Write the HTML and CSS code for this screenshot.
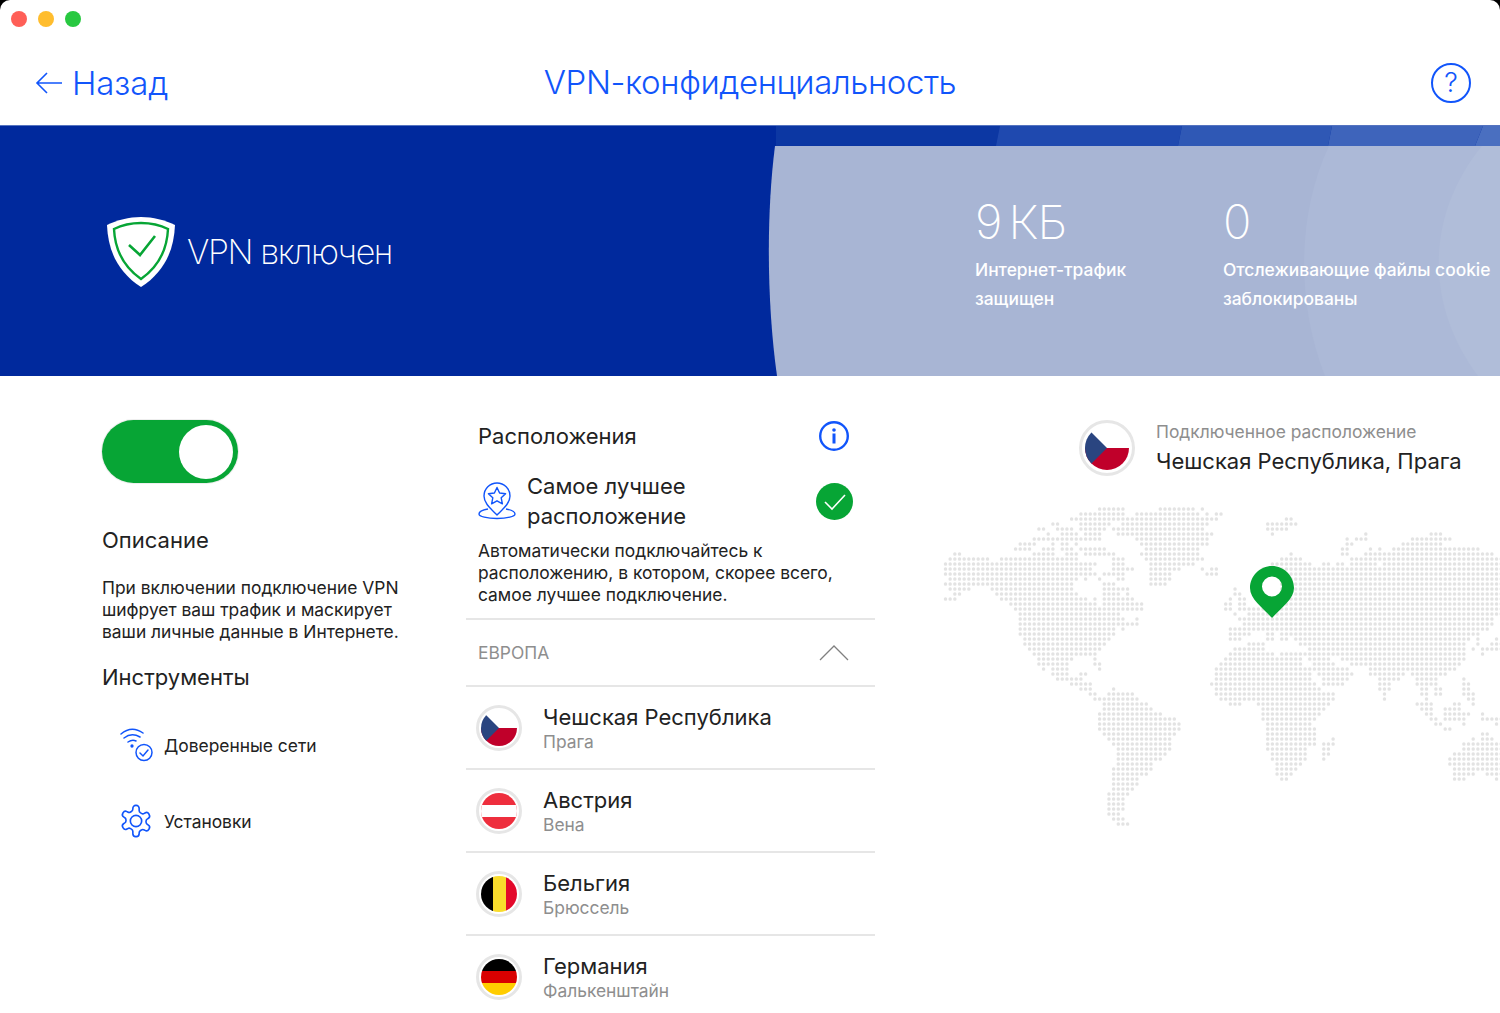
FILE: index.html
```html
<!DOCTYPE html>
<html lang="ru">
    <head>
        <meta charset="UTF-8">
        <title>VPN-конфиденциальность</title>
        <link rel="stylesheet" href="styles.css">
    </head>
    <body>
        <div class="window">
            <div class="titlebar">
                <span class="light light-red"></span>
                <span class="light light-yellow"></span>
                <span class="light light-green"></span>
            </div>

            <header class="topbar">
                <a class="back">
                    <svg class="back-icon" viewBox="0 0 28 22"><path d="M27 11H2M12 1 2 11l10 10"/></svg>
                    <span>Назад</span>
                </a>
                <h1 class="page-title">VPN-конфиденциальность</h1>
                <span class="help">?</span>
            </header>

            <section class="banner">
                <svg class="banner-bg" viewBox="0 0 1500 251" preserveAspectRatio="none">
                    <rect x="776" width="224" height="20" fill="#0c37a3"/>
                    <path d="M1000 0h182l-4 20h-182z" fill="#1f49af"/>
                    <path d="M1182 0h150l-4 20h-150z" fill="#2f58b5"/>
                    <path d="M1332 0h151l-8 20h-147z" fill="#3e64bb"/>
                    <path d="M1483 0h17v20h-25z" fill="#4a6fc0"/>
                    <path d="M775 20H1500V251H777C767 180 766 90 775 20z" fill="#a8b5d4"/>
                    <path d="M1329 20H1500V251H1325C1297 180 1296 90 1329 20z" fill="#acb9d7"/>
                    <path d="M1482 20H1500V251H1478C1425 180 1425 90 1482 20z" fill="#b0bdd9"/>
                </svg>
                <div class="status">
                    <svg class="shield" viewBox="0 0 68 70">
                        <path d="M34 0C46 0 58 3 68 8 67 35 56 56 34 70 12 56 1 35 0 8 10 3 22 0 34 0z" fill="#fff"/>
                        <path d="M34 6C44 6 53 8 61 12 60 34 51 50 34 62 17 50 8 34 7 12 15 8 24 6 34 6z" fill="none" stroke="#07a535" stroke-width="2.4"/>
                        <path d="M22 28l11 10 15-19" fill="none" stroke="#07a535" stroke-width="2.6"/>
                    </svg>
                    <span class="status-text">VPN включен</span>
                </div>
                <div class="stats">
                    <div class="stat stat-traffic">
                        <div class="stat-value">9 КБ</div>
                        <div class="stat-label">Интернет-трафик<br>защищен</div>
                    </div>
                    <div class="stat">
                        <div class="stat-value">0</div>
                        <div class="stat-label">Отслеживающие файлы cookie<br>заблокированы</div>
                    </div>
                </div>
            </section>

            <main class="content">
                <section class="col-left">
                    <div class="toggle"><span class="knob"></span></div>
                    <h2 class="heading heading-desc">Описание</h2>
                    <p class="text">При включении подключение VPN шифрует ваш трафик и маскирует ваши личные данные в Интернете.</p>
                    <h2 class="heading heading-tools">Инструменты</h2>
                    <div class="tool tool-first">
                        <svg class="tool-icon" viewBox="0 0 34 34" fill="none" stroke="#1155fb" stroke-width="1.5" stroke-linecap="round">
                            <path d="M2 6C9 0 17 0 24 5M5 10C10 6 16 6 21 9M9 14C12 12 15 12 17 13"/>
                            <circle cx="13" cy="18" r=".9" fill="#1155fb"/>
                            <circle cx="25" cy="24.5" r="8"/>
                            <path d="M21 25l3 3 5-6"/>
                        </svg>
                        <span>Доверенные сети</span>
                    </div>
                    <div class="tool">
                        <svg class="tool-icon" viewBox="0 0 24 24" fill="none" stroke="#1155fb" stroke-width="1.15" stroke-linejoin="round">
                            <path d="M12.22 1h-.44a2 2 0 0 0-2 2v.6a2 2 0 0 1-1 1.73l-.63.36a2 2 0 0 1-2 0l-.5-.28a2 2 0 0 0-2.73.73l-.22.38a2 2 0 0 0 .73 2.73l.5.3a2 2 0 0 1 1 1.72v.5a2 2 0 0 1-1 1.74l-.5.29a2 2 0 0 0-.73 2.73l.22.38a2 2 0 0 0 2.73.73l.5-.28a2 2 0 0 1 2 0l.63.36a2 2 0 0 1 1 1.73V21a2 2 0 0 0 2 2h.44a2 2 0 0 0 2-2v-.6a2 2 0 0 1 1-1.73l.63-.36a2 2 0 0 1 2 0l.5.28a2 2 0 0 0 2.73-.73l.22-.39a2 2 0 0 0-.73-2.73l-.5-.28a2 2 0 0 1-1-1.74v-.5a2 2 0 0 1 1-1.74l.5-.29a2 2 0 0 0 .73-2.73l-.22-.38a2 2 0 0 0-2.73-.73l-.5.28a2 2 0 0 1-2 0l-.63-.36a2 2 0 0 1-1-1.73V3a2 2 0 0 0-2-2z"/>
                            <circle cx="12" cy="12" r="4"/>
                        </svg>
                        <span>Установки</span>
                    </div>
                </section>

                <section class="col-mid">
                    <div class="loc-head">
                        <h2 class="heading">Расположения</h2>
                        <svg class="info" viewBox="0 0 30 30">
                            <circle cx="15" cy="15" r="13.8" fill="none" stroke="#1155fb" stroke-width="2.400"/>
                            <circle cx="15" cy="9" r="1.800" fill="#1155fb"/>
                            <rect x="13.500" y="12.500" width="3" height="10" fill="#1155fb"/>
                        </svg>
                    </div>
                    <div class="best">
                        <svg class="best-icon" viewBox="0 0 38 38" fill="none" stroke="#1155fb" stroke-width="1.4" stroke-linejoin="round">
                            <path d="M19 33C12 26 6 21 6 14a13 13 0 0 1 26 0C32 21 26 26 19 33z"/>
                            <path d="M19 5.500l2.600 5.500 6 .7-4.400 4.100 1.200 6-5.400-3-5.400 3 1.200-6-4.400-4.100 6-.7z"/>
                            <path d="M10 27C4 28 1 30 1 32c0 2.500 8 4.500 18 4.500s18-2 18-4.500c0-2-3-4-9-5"/>
                        </svg>
                        <span class="best-name">Самое лучшее<br>расположение</span>
                        <svg class="best-check" viewBox="0 0 37 37">
                            <circle cx="18.500" cy="18.500" r="18.500" fill="#07a535"/>
                            <path d="M9 19l7 7 13-14" fill="none" stroke="#fff" stroke-width="1.600"/>
                        </svg>
                    </div>
                    <p class="text best-text">Автоматически подключайтесь к расположению, в котором, скорее всего, самое лучшее подключение.</p>
                    <div class="region">
                        <span>ЕВРОПА</span>
                        <svg class="chevron" viewBox="0 0 30 16"><path d="M1 15 15 1l14 14"/></svg>
                    </div>
                    <div class="country">
                        <div class="flag">
                            <svg viewBox="0 0 36 36"><rect width="36" height="36" fill="#fff"/><rect y="18" width="36" height="18" fill="#c0002a"/><path d="M0 0v36l18-18z" fill="#2a4580"/></svg>
                        </div>
                        <div><div class="country-name">Чешская Республика</div><div class="country-city">Прага</div></div>
                    </div>
                    <div class="country">
                        <div class="flag">
                            <svg viewBox="0 0 36 36"><rect width="36" height="36" fill="#ee2e3d"/><rect y="12" width="36" height="12" fill="#fff"/></svg>
                        </div>
                        <div><div class="country-name">Австрия</div><div class="country-city">Вена</div></div>
                    </div>
                    <div class="country">
                        <div class="flag">
                            <svg viewBox="0 0 36 36"><rect width="12" height="36" fill="#000"/><rect x="12" width="13" height="36" fill="#f9dc2c"/><rect x="25" width="11" height="36" fill="#e3082a"/></svg>
                        </div>
                        <div><div class="country-name">Бельгия</div><div class="country-city">Брюссель</div></div>
                    </div>
                    <div class="country">
                        <div class="flag">
                            <svg viewBox="0 0 36 36"><rect width="36" height="12" fill="#000"/><rect y="12" width="36" height="12" fill="#d90000"/><rect y="24" width="36" height="12" fill="#ffcd00"/></svg>
                        </div>
                        <div><div class="country-name">Германия</div><div class="country-city">Фалькенштайн</div></div>
                    </div>
                </section>

                <section class="col-right">
                    <div class="connected">
                        <div class="flag flag-big">
                            <svg viewBox="0 0 36 36"><rect width="36" height="36" fill="#fff"/><rect y="18" width="36" height="18" fill="#c0002a"/><path d="M0 0v36l18-18z" fill="#2a4580"/></svg>
                        </div>
                        <div>
                            <div class="connected-label">Подключенное расположение</div>
                            <div class="connected-name">Чешская Республика, Прага</div>
                        </div>
                    </div>
                    <div class="map">
                        <svg class="map-dots" width="557" height="325" viewBox="0 0 557 325">
                            <path transform="translate(2.5 2) scale(4.67 5)" fill="none" stroke="#e3e3e3" stroke-width=".74" stroke-linecap="round" stroke-dasharray="0 1" d="
                            M33 0H38.010M46 0H53.010M55 0h.01
                            M29 1H38.010M41 1H54.010M56 1h.01M58 1H59.010
                            M27 2H38.010M39 2H58.010M73 2H74.010
                            M23 3H24.010M29 3H35.010M38 3H56.010M69 3H75.010
                            M20 4H21.010M24 4H27.010M29 4H34.010M36 4H55.010M69 4H73.010
                            M22 5h.01M25 5H28.010M30 5H33.010M37 5H57.010M70 5h.01M90 5h.01M104 5H106.010
                            M19 6H33.010M41 6H56.010M86 6h.01M88 6H90.010M100 6H108.010
                            M16 7H19.010M23 7h.01M25 7H26.010M28 7h.01M42 7H56.010M86 7H87.010M98 7H106.010
                            M15 8H18.010M21 8H23.010M25 8H27.010M29 8H34.010M43 8H54.010M85 8H86.010M91 8h.01M93 8h.01M96 8H111.010M112 8H114.010
                            M2 9H3.010M19 9H23.010M26 9H28.010M30 9H36.010M42 9H54.010M74 9h.01M85 9H86.010M90 9H117.010
                            M1 10H9.010M12 10H28.010M36 10H38.010M43 10H55.010M72 10H76.010M87 10H120.010
                            M0 11H32.010M36 11H38.010M44 11H53.010M70 11H78.010M81 11H82.010M84 11H85.010M87 11H92.010M94 11H120.010
                            M0 12H31.010M36 12H40.010M44 12H50.010M55 12h.01M57 12H58.010M68 12H120.010
                            M0 13H32.010M34 13H38.010M44 13H48.010M56 13H58.010M72 13H120.010
                            M1 14H28.010M30 14h.01M33 14h.01M37 14H38.010M44 14H48.010M72 14H120.010
                            M0 15H27.010M34 15H36.010M44 15H47.010M72 15H120.010
                            M1 16H5.010M10 16H27.010M34 16H38.010M39 16h.01M62 16h.01M72 16H120.010
                            M2 17H3.010M11 17H28.010M34 17H37.010M39 17h.01M62 17H63.010M72 17H120.010
                            M0 18H2.010M12 18H30.010M32 18h.01M34 18H40.010M61 18h.01M63 18H64.010M72 18H120.010
                            M14 19H32.010M34 19H42.010M60 19H61.010M63 19H64.010M72 19H120.010
                            M15 20H42.010M60 20H61.010M63 20H65.010M66 20H120.010
                            M16 21H37.010M62 21h.01M65 21H120.010
                            M16 22H38.010M41 22h.01M63 22H117.010
                            M16 23H41.010M64 23H117.010
                            M16 24H36.010M38 24h.01M61 24H116.010
                            M16 25H36.010M61 25H65.010M69 25H70.010M72 25H114.010
                            M17 26H35.010M61 26H63.010M69 26H70.010M72 26H73.010M75 26H112.010M114 26h.01M118 26h.01
                            M17 27H34.010M65 27H68.010M76 27H111.010M114 27h.01M117 27H119.010
                            M18 28H33.010M62 28H68.010M78 28H111.010M113 28h.01M115 28H119.010
                            M19 29H32.010M61 29H70.010M72 29H111.010M115 29h.01
                            M20 30H27.010M32 30h.01M60 30H76.010M78 30H82.010M85 30H111.010
                            M20 31H26.010M32 31H33.010M59 31H76.010M79 31H83.010M87 31H110.010
                            M21 32h.01M23 32H26.010M33 32h.01M58 32H78.010M79 32H86.010M91 32H109.010
                            M23 33H26.010M29 33H30.010M58 33H78.010M80 33H87.010M91 33H98.010M100 33H107.010
                            M24 34H29.010M58 34H78.010M81 34H86.010M93 34H97.010M101 34H105.010M111 34h.01
                            M27 35H31.010M57 35H79.010M81 35H85.010M93 35H95.010M101 35H105.010M111 35H112.010
                            M29 36H31.010M36 36h.01M58 36H80.010M93 36H95.010M102 36H103.010M105 36H106.010M111 36H112.010
                            M31 37H32.010M35 37H40.010M58 37H83.010M94 37h.01M102 37H103.010M105 37H106.010M111 37H113.010
                            M32 38H34.010M35 38H41.010M59 38H83.010M94 38h.01M103 38h.01M112 38H113.010
                            M34 39H43.010M61 39H63.010M67 39H82.010M101 39H104.010M109 39H110.010M113 39h.01
                            M34 40H44.010M68 40H81.010M102 40H104.010M107 40H110.010
                            M33 41H46.010M68 41H80.010M103 41H104.010M107 41H110.010M111 41H112.010M115 41h.01
                            M33 42H49.010M68 42H79.010M104 42H105.010M107 42H111.010M115 42H119.010
                            M33 43H50.010M69 43H78.010M105 43H106.010M111 43h.01M118 43h.01
                            M33 44H50.010M69 44H79.010M107 44H108.010
                            M34 45H49.010M69 45H79.010M115 45H116.010
                            M35 46H48.010M69 46H79.010M83 46h.01M113 46h.01M115 46H117.010
                            M36 47H48.010M69 47H79.010M81 47H83.010M111 47H119.010
                            M37 48H48.010M69 48H77.010M81 48H82.010M111 48H119.010
                            M37 49H47.010M70 49H77.010M81 49H82.010M109 49H119.010
                            M37 50H46.010M70 50H77.010M81 50h.01M108 50H119.010
                            M37 51H44.010M71 51H76.010M108 51H119.010
                            M36 52H44.010M71 52H75.010M109 52H119.010
                            M36 53H43.010M71 53H74.010M109 53H113.010M116 53H119.010
                            M36 54H41.010M72 54H73.010M109 54H111.010M118 54h.01
                            M36 55H41.010
                            M36 56H40.010
                            M35 57H39.010
                            M35 58H38.010
                            M35 59H38.010
                            M35 60H38.010
                            M35 61H37.010
                            M36 62H38.010
                            M37 63H39.010"/>
                        </svg>
                        <svg class="pin" viewBox="0 0 44 52">
                            <path fill-rule="evenodd" fill="#07a535" d="M22 0C34 0 44 10 44 22 44 33 32 41 22 52 12 41 0 33 0 22 0 10 10 0 22 0zM22 10.500a10 10 0 1 0 0 20 10 10 0 1 0 0-20z"/>
                        </svg>
                    </div>
                </section>
            </main>
        </div>
    </body>
</html>
```
FILE: styles.css
```css
* {
    box-sizing: border-box;
}
html, body {
    margin: 0;
    height: 100%;
    background: #000;
    overflow: hidden;
}
.window {
    width: 1500px;
    height: 1013px;
    background: #fff;
    border-radius: 10px 10px 0 0;
    overflow: hidden;
    font-family: Inter, "Noto Sans", sans-serif;
    color: #222;
}

/* title bar */
.titlebar {
    height: 38px;
    display: flex;
    align-items: center;
    gap: 11px;
    padding-left: 11px;
}
.light {
    width: 16px;
    height: 16px;
    border-radius: 50%;
}
.light-red { background: #ff5f57; }
.light-yellow { background: #ffbd2e; }
.light-green { background: #28c840; }

.topbar {
    height: 87px;
    position: relative;
    display: flex;
    align-items: center;
    justify-content: space-between;
    padding: 2px 29px 0 35px;
    color: #1155fb;
}
.back {
    display: flex;
    align-items: center;
    gap: 9px;
    font-size: 33px;
    font-weight: 300;
    letter-spacing: -0.1px;
}
.back-icon {
    width: 28px;
    height: 22px;
    fill: none;
    stroke: #1155fb;
    stroke-width: 1.6;
}
.page-title {
    position: absolute;
    left: 0;
    right: 0;
    top: 24px;
    margin: 0;
    text-align: center;
    font-size: 33px;
    font-weight: 300;
    letter-spacing: -0.4px;
}
.help {
    width: 40px;
    height: 40px;
    border: 2px solid #1155fb;
    border-radius: 50%;
    text-align: center;
    font-size: 27px;
    font-weight: 300;
    line-height: 36px;
}

/* banner */
.banner {
    height: 251px;
    position: relative;
    display: flex;
    align-items: center;
    background: #00299d;
    border-top: 1px solid #5574c0;
    color: #fff;
}
.banner-bg {
    position: absolute;
    left: 0;
    top: 0;
    width: 100%;
    height: 100%;
}
.status {
    position: relative;
    display: flex;
    align-items: center;
    gap: 13px;
    padding: 2px 0 0 107px;
    width: 975px;
}
.shield {
    width: 68px;
    height: 70px;
}
.status-text {
    margin: -2px 0 0 -1px;
    font-size: 34px;
    font-weight: 200;
    letter-spacing: -1.4px;
}
.stats {
    position: relative;
    display: flex;
    margin-top: 4px;
}
.stat-traffic {
    width: 248px;
}
.stat-value {
    font-size: 47px;
    font-weight: 200;
    line-height: 56px;
    letter-spacing: -1px;
    word-spacing: -5px;
}
.stat-label {
    margin-top: 5px;
    font-size: 17.4px;
    font-weight: 500;
    line-height: 29px;
    white-space: nowrap;
}

/* content */
.content {
    display: flex;
    height: 637px;
}
.col-left {
    width: 466px;
    padding: 44px 0 0 102px;
}
.toggle {
    width: 136px;
    height: 63px;
    display: flex;
    align-items: center;
    justify-content: flex-end;
    padding-right: 5px;
    background: #07a535;
    border-radius: 32px;
    box-shadow: 0 0 0 1px #eee;
}
.knob {
    width: 54px;
    height: 54px;
    background: #fff;
    border-radius: 50%;
}
.heading {
    margin: 0;
    font-size: 22px;
    font-weight: 400;
    line-height: 30px;
}
.heading-desc {
    margin-top: 42px;
}
.text {
    margin: 0;
    font-size: 17.4px;
    line-height: 22px;
}
.col-left .text {
    width: 310px;
    margin-top: 22px;
}
.heading-tools {
    margin-top: 19px;
}
.tool {
    display: flex;
    align-items: center;
    gap: 11px;
    height: 34px;
    margin: 42px 0 0 17px;
    font-size: 17.4px;
}
.tool-first {
    margin-top: 36px;
}
.tool-icon {
    width: 34px;
    height: 34px;
}

.col-mid {
    width: 409px;
}
.loc-head {
    display: flex;
    align-items: center;
    justify-content: space-between;
    padding: 45px 26px 0 12px;
}
.info {
    width: 30px;
    height: 30px;
}
.best {
    display: flex;
    align-items: center;
    padding: 20px 22px 0 12px;
}
.best-icon {
    width: 38px;
    height: 38px;
}
.best-name {
    flex: 1;
    margin-left: 11px;
    font-size: 22px;
    line-height: 30px;
}
.best-check {
    width: 37px;
    height: 37px;
}
.best-text {
    padding: 9px 11px 0 12px;
}
.region {
    display: flex;
    align-items: center;
    justify-content: space-between;
    height: 69px;
    margin-top: 12px;
    padding: 0 26px 0 12px;
    border-top: 2px solid #e6e6e6;
    border-bottom: 2px solid #e6e6e6;
    color: #8e8e8e;
    font-size: 17.4px;
}
.chevron {
    width: 30px;
    height: 16px;
    fill: none;
    stroke: #808080;
    stroke-width: 1.3;
}
.country {
    display: flex;
    align-items: center;
    gap: 21px;
    height: 83px;
    padding-left: 10px;
    border-bottom: 2px solid #e6e6e6;
}
.flag {
    width: 46px;
    height: 46px;
    display: flex;
    align-items: center;
    justify-content: center;
    border: 3px solid #e6e6e6;
    border-radius: 50%;
    background: #fff;
    flex: none;
}
.flag svg {
    width: 36px;
    height: 36px;
    border-radius: 50%;
}
.flag-big {
    width: 56px;
    height: 56px;
}
.flag-big svg {
    width: 44px;
    height: 44px;
}
.country-name {
    font-size: 22px;
    line-height: 28px;
}
.country-city {
    font-size: 17.4px;
    line-height: 22px;
    color: #8e8e8e;
}

.col-right {
    flex: 1;
}
.connected {
    display: flex;
    align-items: center;
    gap: 21px;
    padding: 42px 0 0 204px;
}
.connected-label {
    font-size: 17.4px;
    line-height: 27px;
    color: #8e8e8e;
}
.connected-name {
    font-size: 22px;
    line-height: 32px;
}
.map {
    position: relative;
    width: 557px;
    height: 325px;
    margin: 30px 0 0 68px;
}
.map-dots {
    display: block;
}
.pin {
    position: absolute;
    left: 307px;
    top: 59px;
    width: 44px;
    height: 52px;
}
```
